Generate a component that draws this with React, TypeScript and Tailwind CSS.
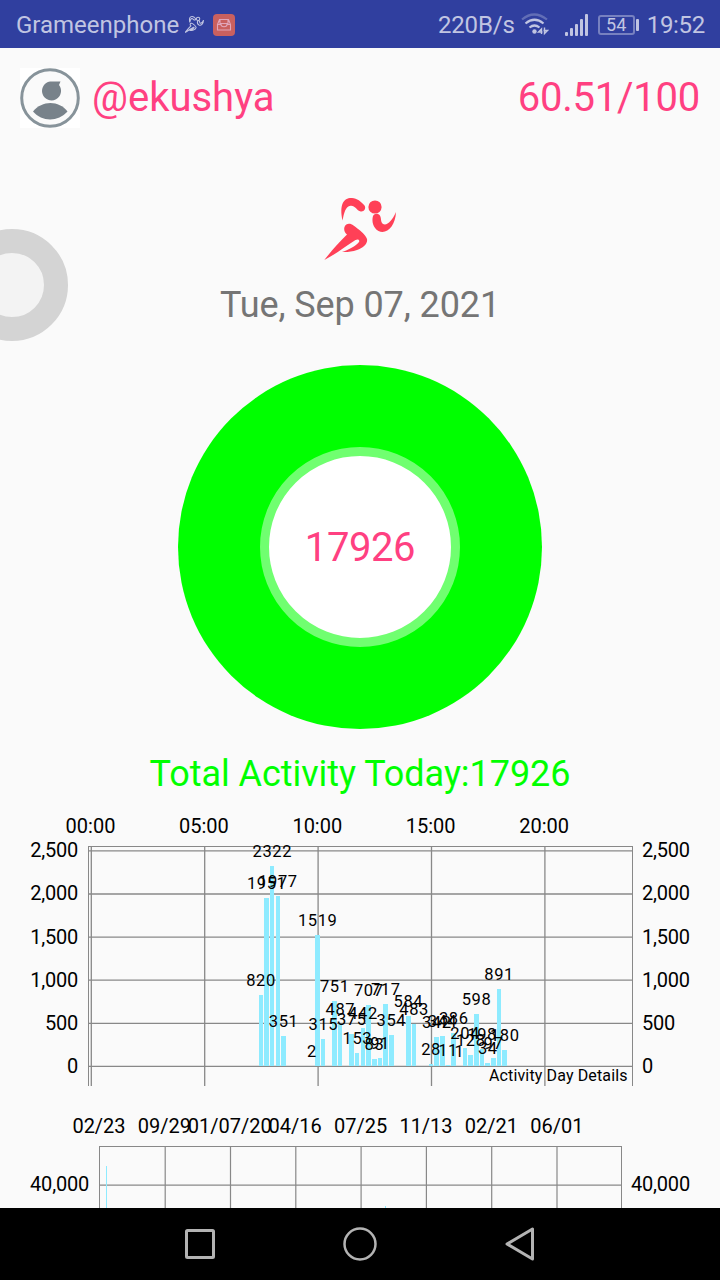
const buckets = [
  { slot: 30, steps: 820 },
  { slot: 31, steps: 1951 },
  { slot: 32, steps: 2322 },
  { slot: 33, steps: 1977 },
  { slot: 34, steps: 351 },
  { slot: 39, steps: 2 },
  { slot: 40, steps: 1519 },
  { slot: 41, steps: 315 },
  { slot: 43, steps: 751 },
  { slot: 44, steps: 487 },
  { slot: 46, steps: 375 },
  { slot: 47, steps: 153 },
  { slot: 48, steps: 442 },
  { slot: 49, steps: 707 },
  { slot: 50, steps: 83 },
  { slot: 51, steps: 91 },
  { slot: 52, steps: 717 },
  { slot: 53, steps: 354 },
  { slot: 56, steps: 584 },
  { slot: 57, steps: 483 },
  { slot: 60, steps: 28 },
  { slot: 61, steps: 342 },
  { slot: 62, steps: 344 },
  { slot: 63, steps: 11 },
  { slot: 64, steps: 386 },
  { slot: 65, steps: 1 },
  { slot: 66, steps: 204 },
  { slot: 67, steps: 128 },
  { slot: 68, steps: 598 },
  { slot: 69, steps: 198 },
  { slot: 70, steps: 34 },
  { slot: 71, steps: 97 },
  { slot: 72, steps: 891 },
  { slot: 73, steps: 180 },
];

const hours = ["00:00", "05:00", "10:00", "15:00", "20:00"];
const levels = ["2,500", "2,000", "1,500", "1,000", "500", "0"];
const dates = ["02/23", "09/29", "01/07/20", "04/16", "07/25", "11/13", "02/21", "06/01"];

const runner = (
  <>
    <circle cx="51" cy="11" r="6.6" />
    <path d="M18.600 24.500C15 8 20 1.500 28 2c5 .3 9 3.500 12.500 7.500 2 3-.7 7-4.500 5.800-3.500-1.200-5-6-9.500-5.500-5 .8-6.500 7-7.900 14.700z" />
    <path d="M49 20c-1.500 5 0 12 5.500 15 8 4 17-5 17.500-19-4 9-9 14-13 12-3-2-1-7-4-9.500-2-1.500-5-.5-6 1.500z" />
    <path d="M20.500 31c1.500-4 6-3.800 9-1.500 5.500 4 12 9 13.500 13.500 1 5-4 9-10 11-5 1.800-10 2.200-15 2 6-2 14-6 17-10 1-2-1-3.500-3.500-2C22 50 12 58 .3 64c7-9 15-18 22.700-25.500-2-1.500-3.500-4.500-2.500-7.500z" />
  </>
);

function StatusBar() {
  return (
    <header className="flex h-12 shrink-0 items-center bg-[#303f9f] pt-px pr-[15px] pl-4 text-[24px] leading-none text-[#c1c5e2]">
      <span className="w-[162px]">Grameenphone</span>
      <svg className="ml-[7px] h-[17px] w-[19px]" viewBox="0 0 74 66" fill="none" stroke="#c1c5e2" strokeWidth="4">
        {runner}
      </svg>
      <svg className="ml-[9px]" width="22" height="22" viewBox="0 0 22 22" fill="none">
        <rect width="22" height="22" rx="4" fill="#c9605f" />
        <path
          d="M4.500 10.500 6.500 5.500h9l2 5V16h-13v-5.500h3.500c0 3 6 3 6 0h3.500M7 6v3.500h8V6"
          stroke="#e1a6ba"
          strokeWidth="1.100"
        />
      </svg>
      <span className="ml-auto tracking-[-0.15px]">220B/s</span>
      <svg className="ml-[6px]" width="28" height="23" viewBox="0 0 28 23" fill="none" stroke="#c1c5e2" strokeWidth="2.200">
        <path d="M1 6.500Q13 -3.500 26 6.500" opacity=".35" />
        <path d="M4.500 10.500Q13.500 3 22.500 10.500M8.500 14.500Q13.500 10.500 18.500 14.500" />
        <circle cx="13.500" cy="18.500" r="2.200" fill="#c1c5e2" stroke="none" />
        <path d="M20.500 21v-5l-3 3h4M23.500 14.500v6l3-3h-4" strokeWidth="1.400" />
      </svg>
      <svg className="ml-[16px]" width="24" height="24" viewBox="0 0 24 24" fill="#c1c5e2">
        <rect x="0" y="19" width="3" height="4" rx="1" />
        <rect x="5" y="15" width="3" height="8" rx="1" />
        <rect x="10" y="11" width="3" height="12" rx="1" />
        <rect x="15" y="6" width="3" height="17" rx="1" />
        <rect x="20" y="1" width="3" height="22" rx="1" />
      </svg>
      <span className="ml-[9px] flex h-5 w-[37px] items-center justify-center rounded-[3px] border-2 border-[#7781c0] text-[18px]">
        54
      </span>
      <span className="mr-[8px] ml-px h-3 w-[3px] rounded-[1px] bg-[#c1c5e2]" />
      <span className="tracking-[-0.3px]">19:52</span>
    </header>
  );
}

function Profile() {
  return (
    <div className="flex h-[100px] items-center px-5 text-[40px] leading-none text-[#ff4081]">
      <svg className="bg-white" width="60" height="60" viewBox="0 0 60 60">
        <circle cx="30" cy="30" r="28.300" fill="#fafafa" stroke="#87939a" strokeWidth="3" />
        <path d="M30 13.500h10.500l-1.500 3.500A9.500 9.500 0 1 1 30 13.500z" fill="#78828a" />
        <path d="M13 43.500C22 32 39 32 47.500 43.500 38 54 22 54 13 43.500z" fill="#78828a" />
      </svg>
      <span className="ml-3">@ekushya</span>
      <span className="ml-auto tracking-[-0.25px]">60.51/100</span>
    </div>
  );
}

function DayChart() {
  return (
    <svg className="block shrink-0" width="720" height="300" viewBox="0 806 720 300">
      <g stroke="#888888" strokeWidth="1">
        <path d="M88 846.500H633M88.500 846V1086M632.500 846V1086" fill="none" />
        {levels.map((level, i) => (
          <line key={level} x1="89" x2="632" y1={850.9 + i * 43.1} y2={850.9 + i * 43.1} strokeWidth="1.300" />
        ))}
        {hours.map((hour, i) => (
          <line key={hour} x1={91.3 + i * 113.4} x2={91.3 + i * 113.4} y1="847" y2="1086" strokeWidth="1.300" />
        ))}
      </g>
      <g fill="#8eebff" shapeRendering="crispEdges">
        {buckets.map(({ slot, steps }) => (
          <rect
            key={slot}
            x={88.5 + slot * 5.67}
            y={1066 - steps * 0.0862}
            width="4.500"
            height={steps * 0.0862}
          />
        ))}
      </g>
      <g fontSize="16.500" letterSpacing="0.6" textAnchor="middle">
        {buckets.map(({ slot, steps }) => (
          <text key={slot} x={90.9 + slot * 5.67} y={1057 - steps * 0.0862}>
            {steps}
          </text>
        ))}
      </g>
      <g fontSize="20">
        {hours.map((hour, i) => (
          <text key={hour} x={90.5 + i * 113.4} y="833.300" textAnchor="middle">
            {hour}
          </text>
        ))}
        {levels.map((level, i) => (
          <g key={level} letterSpacing="-0.250">
            <text x="78" y={857.3 + i * 43.1} textAnchor="end">
              {level}
            </text>
            <text x="642" y={857.3 + i * 43.1}>
              {level}
            </text>
          </g>
        ))}
      </g>
      <text x="627.500" y="1081" fontSize="16" textAnchor="end" textLength="138.500">
        Activity Day Details
      </text>
    </svg>
  );
}

function HistoryChart() {
  return (
    <svg className="block shrink-0" width="720" height="102" viewBox="0 1106 720 102">
      <g stroke="#888888" fill="none">
        <path d="M99 1146.500H622M99.500 1146V1208M621.500 1146V1208" />
        <path d="M100 1185.200H621" strokeWidth="1.300" />
        {dates.slice(1).map((date, i) => (
          <line key={date} x1={165.2 + i * 65.3} x2={165.2 + i * 65.3} y1="1147" y2="1208" strokeWidth="1.200" />
        ))}
      </g>
      <rect x="106" y="1166" width="1" height="42" fill="#8eebff" />
      <rect x="385" y="1206" width="1" height="2" fill="#8eebff" />
      <g fontSize="20" textAnchor="middle">
        {dates.map((date, i) => (
          <text key={date} x={99 + i * 65.4} y="1133.300">
            {date}
          </text>
        ))}
      </g>
      <g fontSize="20" letterSpacing="-0.200">
        <text x="89" y="1191.300" textAnchor="end">
          40,000
        </text>
        <text x="631" y="1191.300">40,000</text>
      </g>
    </svg>
  );
}

function NavBar() {
  return (
    <nav className="flex h-[72px] shrink-0 items-center justify-center gap-[120px] bg-black">
      <svg width="40" height="40" fill="none" stroke="#b3b3b3" strokeWidth="3">
        <rect x="6.500" y="6.500" width="27" height="27" rx="1" />
      </svg>
      <svg width="40" height="40" fill="none" stroke="#b3b3b3" strokeWidth="2.500">
        <circle cx="20" cy="20" r="15.500" />
      </svg>
      <svg width="40" height="40" fill="none" stroke="#b3b3b3" strokeWidth="3" strokeLinejoin="round">
        <path d="M7 20 32.500 5v30z" />
      </svg>
    </nav>
  );
}

export default function App() {
  return (
    <div className="relative flex h-[1280px] w-[720px] flex-col overflow-hidden bg-[#fafafa] font-['Roboto',sans-serif]">
      <StatusBar />
      <main className="flex h-[1160px] shrink-0 flex-col overflow-hidden">
        <Profile />
        <div className="flex h-[658px] flex-col items-center pt-[48px]">
          <svg className="ml-[2px] h-[66px] w-[74px] shrink-0" viewBox="0 0 74 66" fill="#ff4057">
            {runner}
          </svg>
          <p className="mt-[19px] h-[48px] text-[36px] leading-[48px] tracking-[-0.1px] text-[#757575]">
            Tue, Sep 07, 2021
          </p>
          <div className="mt-[36px] flex size-[364px] shrink-0 items-center justify-center rounded-full bg-[#00ff00]">
            <div className="flex size-[200px] items-center justify-center rounded-full border-[9px] border-[#70ff70] bg-white pt-[2px] text-[40px] tracking-[-0.4px] text-[#ff4081]">
              17926
            </div>
          </div>
          <p className="mt-[21px] text-[36px] leading-[48px] tracking-[-0.05px] text-[#00ff00]">
            Total Activity Today:17926
          </p>
        </div>
        <DayChart />
        <HistoryChart />
      </main>
      <NavBar />
      {/* floating assistive button, half off the left edge */}
      <div className="absolute top-[229px] -left-[44px] size-[112px] rounded-full border-[24px] border-[#d4d4d4] bg-[#f3f3f3]" />
    </div>
  );
}
